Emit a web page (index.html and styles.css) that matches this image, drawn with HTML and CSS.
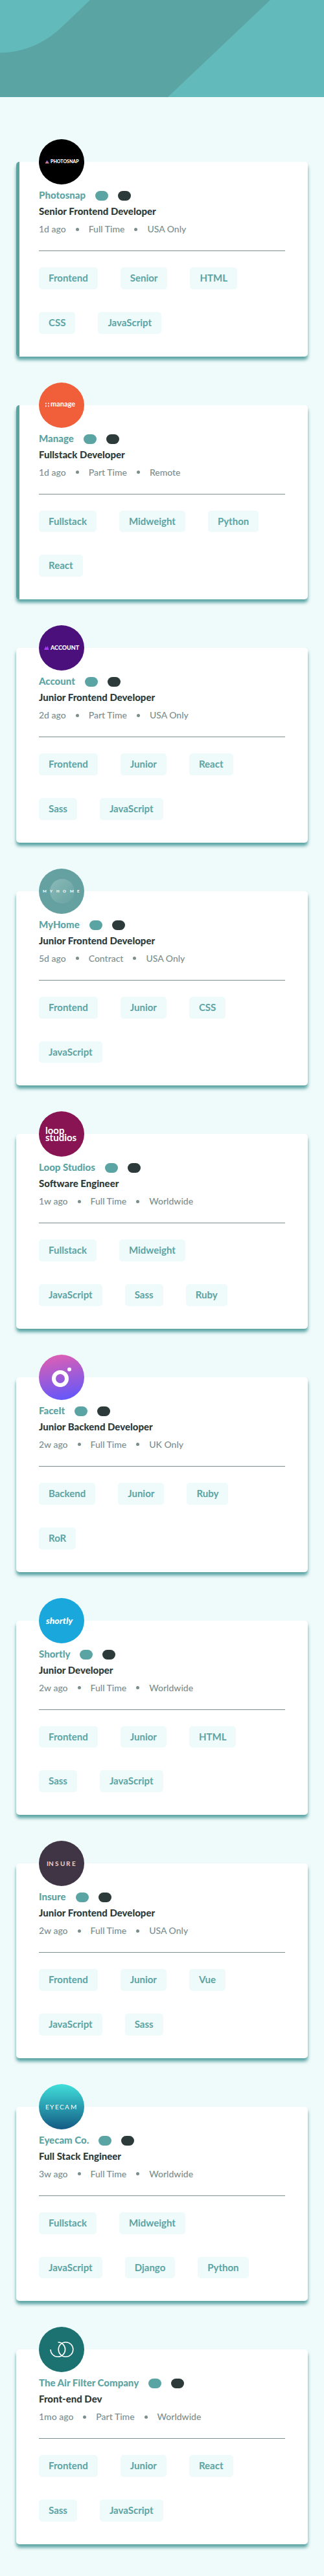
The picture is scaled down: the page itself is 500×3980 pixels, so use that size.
FILE: index.html
```
<!DOCTYPE html>
<html lang="en">
<head>
<meta charset="utf-8">
<meta name="viewport" content="width=device-width, initial-scale=1">
<title>Job listings</title>
<link rel="stylesheet" href="styles.css">
</head>
<body>
<header class="banner">
  <svg class="banner-art" viewBox="0 0 500 150" preserveAspectRatio="none" aria-hidden="true">
    <path d="M0 0H139L94 43C66 69 34 81 0 81.500Z"/>
    <path d="M417 0H500V150H259Z"/>
  </svg>
</header>
<main class="listings">

  <article class="card featured">
    <svg class="logo" viewBox="0 0 70 70" aria-hidden="true">
      <defs><linearGradient id="snap" x1="0" y1="0" x2="0" y2="1"><stop offset="0" stop-color="#4a5ff0"/><stop offset="1" stop-color="#f08b7a"/></linearGradient></defs>
      <circle cx="35" cy="35" r="35" fill="#000"/>
      <path d="M12.500 32.500L16 37.500H9.500Z" fill="url(#snap)"/>
      <text class="mark heavy" x="18" y="37" font-size="7">PHOTOSNAP</text>
    </svg>
    <div class="company"><h2>Photosnap</h2><span class="badge new"></span><span class="badge hot"></span></div>
    <h3>Senior Frontend Developer</h3>
    <ul class="meta"><li>1d ago</li><li>Full Time</li><li>USA Only</li></ul>
    <div class="tags"><button type="button">Frontend</button><button type="button">Senior</button><button type="button">HTML</button><button type="button">CSS</button><button type="button">JavaScript</button></div>
  </article>

  <article class="card featured">
    <svg class="logo" viewBox="0 0 70 70" aria-hidden="true">
      <circle cx="35" cy="35" r="35" fill="#f15f3a"/>
      <path d="M10 31.500h1.700v1.700H10zM14 31.500h1.700v1.700H14zM10 35.500h1.700v1.700H10zM14 35.500h1.700v1.700H14z" fill="#fff"/>
      <text class="mark bold" x="18" y="37" font-size="11">manage</text>
    </svg>
    <div class="company"><h2>Manage</h2><span class="badge new"></span><span class="badge hot"></span></div>
    <h3>Fullstack Developer</h3>
    <ul class="meta"><li>1d ago</li><li>Part Time</li><li>Remote</li></ul>
    <div class="tags"><button type="button">Fullstack</button><button type="button">Midweight</button><button type="button">Python</button><button type="button">React</button></div>
  </article>

  <article class="card">
    <svg class="logo" viewBox="0 0 70 70" aria-hidden="true">
      <circle cx="35" cy="35" r="35" fill="#4b107c"/>
      <path d="M8 38L10.500 32.500L12 35L13.500 32L15.500 38Z" fill="#a43cf5"/>
      <text class="mark heavy" x="18" y="38" font-size="9">ACCOUNT</text>
    </svg>
    <div class="company"><h2>Account</h2><span class="badge new"></span><span class="badge hot"></span></div>
    <h3>Junior Frontend Developer</h3>
    <ul class="meta"><li>2d ago</li><li>Part Time</li><li>USA Only</li></ul>
    <div class="tags"><button type="button">Frontend</button><button type="button">Junior</button><button type="button">React</button><button type="button">Sass</button><button type="button">JavaScript</button></div>
  </article>

  <article class="card">
    <svg class="logo" viewBox="0 0 70 70" aria-hidden="true">
      <defs><linearGradient id="home" x1="0" y1="0" x2="1" y2="1"><stop offset="0" stop-color="#8abab8"/><stop offset="1" stop-color="#67a2a1"/></linearGradient></defs>
      <circle cx="35" cy="35" r="35" fill="#66a1a1"/>
      <circle cx="36" cy="35" r="19" fill="url(#home)"/>
      <text class="mark heavy" x="6 17 27 37 48 59" y="37" font-size="6">MYHOME</text>
    </svg>
    <div class="company"><h2>MyHome</h2><span class="badge new"></span><span class="badge hot"></span></div>
    <h3>Junior Frontend Developer</h3>
    <ul class="meta"><li>5d ago</li><li>Contract</li><li>USA Only</li></ul>
    <div class="tags"><button type="button">Frontend</button><button type="button">Junior</button><button type="button">CSS</button><button type="button">JavaScript</button></div>
  </article>

  <article class="card">
    <svg class="logo" viewBox="0 0 70 70" aria-hidden="true">
      <circle cx="35" cy="35" r="35" fill="#891453"/>
      <text class="mark bold" x="10" y="35" font-size="15">loop</text>
      <text class="mark bold" x="10" y="46" font-size="15">studios</text>
    </svg>
    <div class="company"><h2>Loop Studios</h2><span class="badge new"></span><span class="badge hot"></span></div>
    <h3>Software Engineer</h3>
    <ul class="meta"><li>1w ago</li><li>Full Time</li><li>Worldwide</li></ul>
    <div class="tags"><button type="button">Fullstack</button><button type="button">Midweight</button><button type="button">JavaScript</button><button type="button">Sass</button><button type="button">Ruby</button></div>
  </article>

  <article class="card">
    <svg class="logo" viewBox="0 0 70 70" aria-hidden="true">
      <defs><linearGradient id="face" x1="0.400" y1="0" x2="0.600" y2="1"><stop offset="0" stop-color="#dc5fb4"/><stop offset="1" stop-color="#6357fb"/></linearGradient></defs>
      <circle cx="35" cy="35" r="35" fill="url(#face)"/>
      <circle cx="33" cy="37" r="10" fill="none" stroke="#fff" stroke-width="6"/>
      <circle cx="47" cy="22.700" r="3" fill="#fff"/>
    </svg>
    <div class="company"><h2>FaceIt</h2><span class="badge new"></span><span class="badge hot"></span></div>
    <h3>Junior Backend Developer</h3>
    <ul class="meta"><li>2w ago</li><li>Full Time</li><li>UK Only</li></ul>
    <div class="tags"><button type="button">Backend</button><button type="button">Junior</button><button type="button">Ruby</button><button type="button">RoR</button></div>
  </article>

  <article class="card">
    <svg class="logo" viewBox="0 0 70 70" aria-hidden="true">
      <circle cx="35" cy="35" r="35" fill="#1aa8dc"/>
      <text class="mark heavy slanted" x="11" y="40" font-size="14">shortly</text>
    </svg>
    <div class="company"><h2>Shortly</h2><span class="badge new"></span><span class="badge hot"></span></div>
    <h3>Junior Developer</h3>
    <ul class="meta"><li>2w ago</li><li>Full Time</li><li>Worldwide</li></ul>
    <div class="tags"><button type="button">Frontend</button><button type="button">Junior</button><button type="button">HTML</button><button type="button">Sass</button><button type="button">JavaScript</button></div>
  </article>

  <article class="card">
    <svg class="logo" viewBox="0 0 70 70" aria-hidden="true">
      <circle cx="35" cy="35" r="35" fill="#403544"/>
      <text class="mark bold blush" x="12 15 25 33 42 51" y="39" font-size="10">INSURE</text>
    </svg>
    <div class="company"><h2>Insure</h2><span class="badge new"></span><span class="badge hot"></span></div>
    <h3>Junior Frontend Developer</h3>
    <ul class="meta"><li>2w ago</li><li>Full Time</li><li>USA Only</li></ul>
    <div class="tags"><button type="button">Frontend</button><button type="button">Junior</button><button type="button">Vue</button><button type="button">JavaScript</button><button type="button">Sass</button></div>
  </article>

  <article class="card">
    <svg class="logo" viewBox="0 0 70 70" aria-hidden="true">
      <defs><linearGradient id="eye" x1="0" y1="0" x2="0" y2="1"><stop offset="0" stop-color="#40dfdb"/><stop offset="1" stop-color="#135a83"/></linearGradient></defs>
      <circle cx="35" cy="35" r="35" fill="url(#eye)"/>
      <text class="mark" x="10 17 25 32 40 49" y="39" font-size="10">EYECAM</text>
    </svg>
    <div class="company"><h2>Eyecam Co.</h2><span class="badge new"></span><span class="badge hot"></span></div>
    <h3>Full Stack Engineer</h3>
    <ul class="meta"><li>3w ago</li><li>Full Time</li><li>Worldwide</li></ul>
    <div class="tags"><button type="button">Fullstack</button><button type="button">Midweight</button><button type="button">JavaScript</button><button type="button">Django</button><button type="button">Python</button></div>
  </article>

  <article class="card">
    <svg class="logo" viewBox="0 0 70 70" aria-hidden="true">
      <circle cx="35" cy="35" r="35" fill="#1b7270"/>
      <g fill="none" stroke="#fff" stroke-width="1.600"><circle cx="41.500" cy="35" r="11.300"/><path d="M29.500 23.700A11.300 11.300 0 1 1 18 35"/></g>
    </svg>
    <div class="company"><h2>The Air Filter Company</h2><span class="badge new"></span><span class="badge hot"></span></div>
    <h3>Front-end Dev</h3>
    <ul class="meta"><li>1mo ago</li><li>Part Time</li><li>Worldwide</li></ul>
    <div class="tags"><button type="button">Frontend</button><button type="button">Junior</button><button type="button">React</button><button type="button">Sass</button><button type="button">JavaScript</button></div>
  </article>

</main>
</body>
</html>
```
FILE: styles.css
```
:root {
  --teal: #5ba4a4;
  --pale: #effafa;
  --ink: #2c3a3a;
  --grey: #7b8e8e;
}

* {
  box-sizing: border-box;
  margin: 0;
  padding: 0;
}

body {
  background: var(--pale);
  font-family: Lato, "Liberation Sans", sans-serif;
  font-size: 15px;
}

.banner {
  height: 150px;
  background: var(--teal);
}

.banner-art {
  display: block;
  width: 100%;
  height: 100%;
  fill: #63baba;
}

.listings {
  display: flex;
  flex-direction: column;
  gap: 75px;
  padding: 100px 25px 48px;
}

.card {
  position: relative;
  padding: 45px 35px 35px;
  background: #fff;
  border-radius: 5px;
  box-shadow: 0 5px 5px var(--teal);
}

.featured {
  padding-left: 30px;
  border-left: 5px solid var(--teal);
}

.logo {
  position: absolute;
  top: -35px;
  left: 35px;
  width: 70px;
  height: 70px;
}

.featured .logo {
  left: 30px;
}

.mark {
  fill: #fff;
  font-family: Lato, "Liberation Sans", sans-serif;
}

.bold {
  font-weight: 700;
}

.heavy {
  font-weight: 900;
}

.slanted {
  font-style: italic;
}

.blush {
  fill: #f5cfc4;
}

.company {
  display: flex;
  align-items: flex-start;
  gap: 15px;
  height: 15px;
}

h2,
h3 {
  font-size: 15px;
  font-weight: 900;
}

h2 {
  line-height: 13px;
  color: var(--teal);
}

h3 {
  margin-top: 6px;
  line-height: 20px;
  color: var(--ink);
}

.badge {
  width: 20px;
  height: 15px;
  border-radius: 8px;
}

.new {
  background: var(--teal);
}

.hot {
  background: var(--ink);
}

.meta {
  display: flex;
  align-items: center;
  gap: 15px;
  margin-top: 8px;
  padding-bottom: 23px;
  border-bottom: 1px solid var(--grey);
  list-style: none;
  font-size: 14px;
  font-weight: 500;
  line-height: 20px;
  color: var(--grey);
}

.meta li {
  display: flex;
  align-items: center;
  gap: 15px;
}

.meta li + li::before {
  content: "";
  width: 5px;
  height: 5px;
  border-radius: 50%;
  background: var(--grey);
}

.tags {
  display: flex;
  flex-wrap: wrap;
  row-gap: 35px;
  margin-top: 25px;
}

.tags button {
  margin-right: 35px;
  padding: 10px 15px;
  border: 0;
  border-radius: 5px;
  background: var(--pale);
  color: var(--teal);
  font: inherit;
  font-weight: 700;
  line-height: 0.92;
  cursor: pointer;
}
```
